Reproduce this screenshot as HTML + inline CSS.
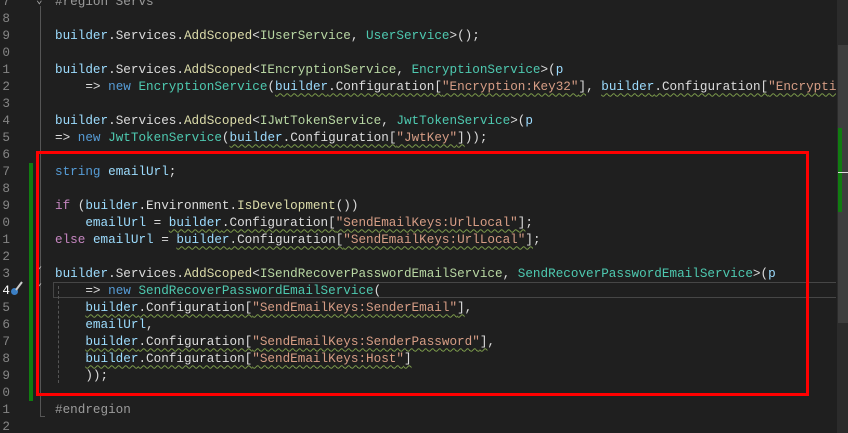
<!DOCTYPE html>
<html><head><meta charset="utf-8"><style>
html,body{margin:0;padding:0;width:848px;height:433px;overflow:hidden;background:#1f1f1f;}
body{position:relative;font-family:"Liberation Mono",monospace;font-size:12.65px;}
.ln{position:absolute;left:-4px;width:14px;text-align:right;color:#858585;line-height:17px;white-space:pre;}
.clip{position:absolute;left:0;top:0;width:836px;height:433px;overflow:hidden;}
.code{position:absolute;left:55px;top:-7.5px;line-height:17px;white-space:pre;color:#dcdcdc;}
.v{color:#9cdcfe}.f{color:#dcdcaa}.t{color:#4ec9b0}.i{color:#b8d7a3}.k{color:#569cd6}.s{color:#d69d85}.r{color:#9b9b9b}.c{color:#c586c0}
.w{text-decoration:underline wavy #7b9a4a;text-decoration-thickness:1px;text-underline-offset:3px;}
</style></head><body>
<div style="position:absolute;left:837px;top:0;width:11px;height:433px;background:#2b2b2b"></div>
<div style="position:absolute;left:838px;top:45px;width:10px;height:278px;background:#3e3e3e"></div>
<div style="position:absolute;left:838px;top:128px;width:4px;height:84px;background:#107c10"></div>
<div style="position:absolute;left:838px;top:172px;width:10px;height:1px;background:#ddd"></div>
<div class="clip">
<div style="position:absolute;left:53px;top:282px;width:790px;height:14px;border:1px solid #464646"></div>
<div style="position:absolute;left:40px;top:6px;width:1px;height:411px;background:#555"></div>
<div style="position:absolute;left:40px;top:416px;width:5px;height:1px;background:#555"></div>
<div style="position:absolute;left:58px;top:286px;width:0;height:97px;border-left:1px dashed #555"></div>
<div style="position:absolute;left:29px;top:163px;width:4px;height:238px;background:#107c10"></div>
<div style="position:absolute;left:36px;top:-7px;color:#aaa;font-size:11px">⌄</div>
<div style="position:absolute;left:36px;top:264px;color:#ccc;font-size:10px">✓</div>
<div style="position:absolute;left:36px;top:281px;color:#ccc;font-size:10px">✓</div>
<svg style="position:absolute;left:10px;top:280px" width="14" height="16" viewBox="0 0 14 16"><ellipse cx="4.5" cy="11.5" rx="3.5" ry="3.5" fill="#3b7fc4"/><path d="M6 10 L12 2" stroke="#ccc" stroke-width="2"/></svg>
<div class="ln" style="top:-7.5px">7
8
9
0
1
2
3
4
5
6
7
8
9
0
1
2
3
<span style="color:#fff">4</span>
5
6
7
8
9
0
1
2</div>
<div class="code"><span class="r">#region Servs</span>

<span class="v">builder</span>.Services.<span class="f">AddScoped</span>&lt;<span class="i">IUserService</span>, <span class="t">UserService</span>&gt;();

<span class="v">builder</span>.Services.<span class="f">AddScoped</span>&lt;<span class="i">IEncryptionService</span>, <span class="t">EncryptionService</span>&gt;(<span class="v">p</span>
    =&gt; <span class="k">new</span> <span class="t">EncryptionService</span>(<span class="w"><span class="v">builder</span>.Configuration[<span class="s">"Encryption:Key32"</span>]</span>, <span class="w"><span class="v">builder</span>.Configuration[<span class="s">"Encryption:IV16"</span>]</span>));

<span class="v">builder</span>.Services.<span class="f">AddScoped</span>&lt;<span class="i">IJwtTokenService</span>, <span class="t">JwtTokenService</span>&gt;(<span class="v">p</span>
=&gt; <span class="k">new</span> <span class="t">JwtTokenService</span>(<span class="w"><span class="v">builder</span>.Configuration[<span class="s">"JwtKey"</span>]</span>));

<span class="k">string</span> <span class="v">emailUrl</span>;

<span class="c">if</span> (<span class="v">builder</span>.Environment.<span class="f">IsDevelopment</span>())
    <span class="v">emailUrl</span> = <span class="w"><span class="v">builder</span>.Configuration[<span class="s">"SendEmailKeys:UrlLocal"</span>]</span>;
<span class="c">else</span> <span class="v">emailUrl</span> = <span class="w"><span class="v">builder</span>.Configuration[<span class="s">"SendEmailKeys:UrlLocal"</span>]</span>;

<span class="v">builder</span>.Services.<span class="f">AddScoped</span>&lt;<span class="i">ISendRecoverPasswordEmailService</span>, <span class="t">SendRecoverPasswordEmailService</span>&gt;(<span class="v">p</span>
    =&gt; <span class="k">new</span> <span class="t">SendRecoverPasswordEmailService</span>(
    <span class="w"><span class="v">builder</span>.Configuration[<span class="s">"SendEmailKeys:SenderEmail"</span>]</span>,
    <span class="v">emailUrl</span>,
    <span class="w"><span class="v">builder</span>.Configuration[<span class="s">"SendEmailKeys:SenderPassword"</span>]</span>,
    <span class="w"><span class="v">builder</span>.Configuration[<span class="s">"SendEmailKeys:Host"</span>]</span>
    ));

<span class="r">#endregion</span>
</div>
</div>
<div style="position:absolute;left:36px;top:151px;width:767px;height:239px;border:3px solid #ff0000"></div>
</body></html>
